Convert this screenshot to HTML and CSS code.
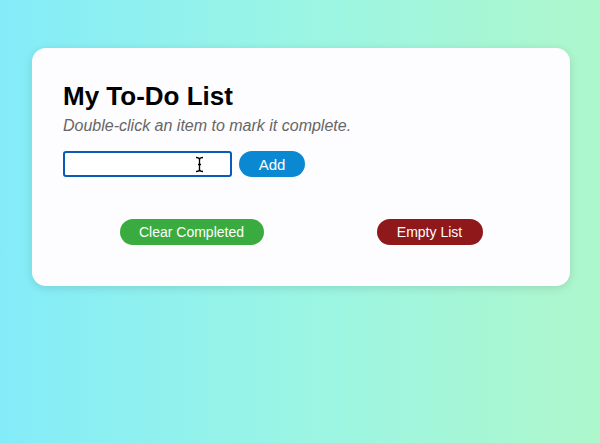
FILE: index.html
```html
<!DOCTYPE html>
<html>
<head>
<meta charset="utf-8">
<link rel="stylesheet" href="styles.css">
</head>
<body>
<div class="page">
  <div class="card">
    <h1 class="title">My To-Do List</h1>
    <p class="hint">Double-click an item to mark it complete.</p>
    <div class="entry">
      <div class="field">
        <input class="input" type="text">
        <svg class="cursor" width="9" height="17" viewBox="0 0 9 17"><path d="M1 1.5 Q4.5 1.5 4.5 3.5 Q4.5 1.5 8 1.5 M4.5 3.5 V13.5 M1 15.5 Q4.5 15.5 4.5 13.5 Q4.5 15.5 8 15.5 M3 8.5 H6" fill="none" stroke="#000" stroke-width="1.3"/></svg>
      </div>
      <button class="btn btn-add">Add</button>
    </div>
    <ul class="list"></ul>
    <div class="actions">
      <button class="btn btn-clear">Clear Completed</button>
      <button class="btn btn-empty">Empty List</button>
    </div>
  </div>
</div>
</body>
</html>
```
FILE: styles.css
```css
html, body {
  margin: 0;
  padding: 0;
  height: 100%;
}
body {
  background: linear-gradient(90deg, #84ecf9 0%, #9af5e4 50%, #aef7cc 100%);
  font-family: "Liberation Sans", Arial, sans-serif;
}
.page {
  padding: 48px 30px 0 32px;
}
.card {
  background: #fdfcfe;
  border-radius: 14px;
  box-shadow: 0 2px 10px rgba(0, 0, 0, 0.12);
  padding: 33px 31px 41px 31px;
}
.title {
  margin: 0;
  font-size: 26px;
  font-weight: bold;
  line-height: 30px;
  color: #000;
}
.hint {
  margin: 5px 0 0 0;
  font-size: 16px;
  font-style: italic;
  color: #666;
  line-height: 20px;
}
.entry {
  display: flex;
  align-items: center;
  gap: 7px;
  margin-top: 15px;
}
.field {
  position: relative;
}
.input {
  box-sizing: border-box;
  width: 169px;
  height: 26px;
  border: 2px solid #0a5bb8;
  border-radius: 3px;
  outline: none;
  background: #fff;
  margin: 0;
  display: block;
}
.cursor {
  position: absolute;
  left: 132px;
  top: 5px;
}
.btn {
  border: none;
  border-radius: 13px;
  height: 26px;
  color: #fff;
  font-family: "Liberation Sans", Arial, sans-serif;
  font-size: 14px;
  padding: 0;
  margin: 0;
}
.btn-add {
  background: #0a88d2;
  width: 66px;
  font-size: 15px;
}
.list {
  margin: 0;
  padding: 0;
  height: 42px;
  list-style: none;
}
.actions {
  display: flex;
  justify-content: space-around;
}
.btn-clear {
  background: #3aab3f;
  width: 144px;
}
.btn-empty {
  background: #8f181b;
  width: 106px;
}
```
